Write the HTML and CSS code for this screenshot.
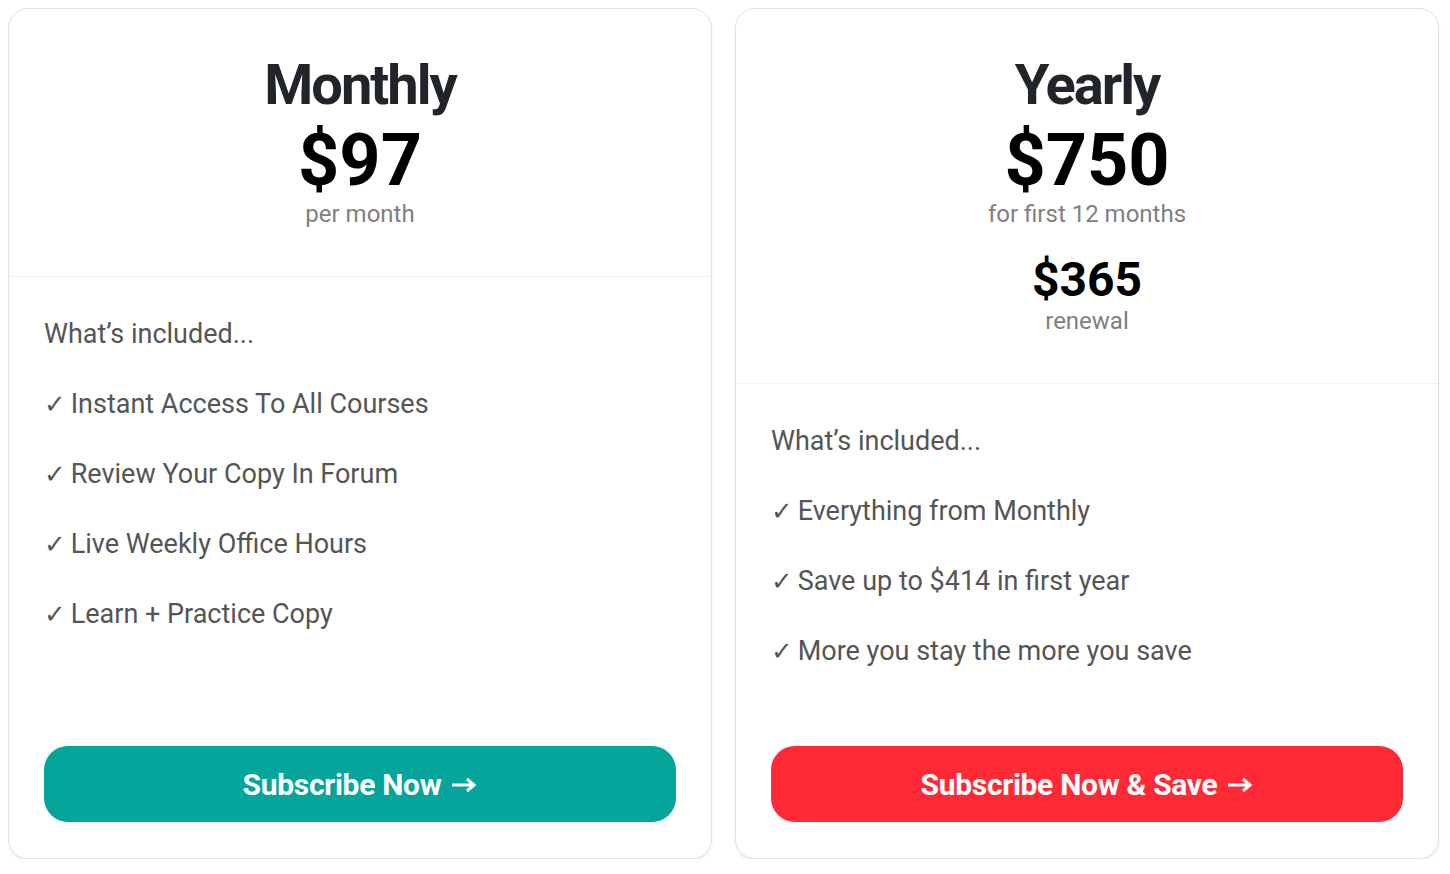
FILE: index.html
```html
<!DOCTYPE html>
<html lang="en">
<head>
<meta charset="utf-8">
<title>Pricing</title>
<link rel="stylesheet" href="styles.css">
</head>
<body>
<div class="plans">
  <div class="card">
    <div class="card-head">
      <div class="plan-name">Monthly</div>
      <div class="price">$97</div>
      <div class="price-note">per month</div>
    </div>
    <div class="card-body">
      <div class="included">What’s included...</div>
      <ul class="features">
        <li><span class="check">✓</span> Instant Access To All Courses</li>
        <li><span class="check">✓</span> Review Your Copy In Forum</li>
        <li><span class="check">✓</span> Live Weekly Office Hours</li>
        <li><span class="check">✓</span> Learn + Practice Copy</li>
      </ul>
      <a class="btn btn-teal" href="#">Subscribe Now <svg class="arrow" viewBox="0 0 26 16" width="26" height="16"><path d="M1 8 H23 M16 2 L23 8 L16 14" fill="none" stroke="#fff" stroke-width="3"/></svg></a>
    </div>
  </div>
  <div class="card">
    <div class="card-head">
      <div class="plan-name">Yearly</div>
      <div class="price">$750</div>
      <div class="price-note">for first 12 months</div>
      <div class="renew-price">$365</div>
      <div class="price-note">renewal</div>
    </div>
    <div class="card-body">
      <div class="included">What’s included...</div>
      <ul class="features">
        <li><span class="check">✓</span> Everything from Monthly</li>
        <li><span class="check">✓</span> Save up to $414 in first year</li>
        <li><span class="check">✓</span> More you stay the more you save</li>
      </ul>
      <a class="btn btn-red" href="#">Subscribe Now &amp; Save <svg class="arrow" viewBox="0 0 26 16" width="26" height="16"><path d="M1 8 H23 M16 2 L23 8 L16 14" fill="none" stroke="#fff" stroke-width="3"/></svg></a>
    </div>
  </div>
</div>
</body>
</html>
```

FILE: styles.css
```css
* { box-sizing: border-box; }
html, body { background: #ffffff; }
body {
  margin: 8px;
  font-family: Roboto, "Liberation Sans", Arial, sans-serif;
}
.plans {
  display: grid;
  grid-template-columns: 704px 704px;
  column-gap: 23px;
}
.card {
  height: 851px;
  border: 1px solid #e3e3e3;
  border-radius: 20px;
  box-shadow: 0 2px 3px rgba(0, 0, 0, 0.07);
  display: flex;
  flex-direction: column;
  background: #fff;
}
.card-head {
  padding: 40px 0 49px;
  text-align: center;
  border-bottom: 1px solid #f1f1f1;
}
.plan-name {
  font-size: 56px;
  line-height: 72px;
  font-weight: 700;
  color: #212529;
  letter-spacing: -2px;
}
.price {
  font-size: 72px;
  line-height: 80px;
  font-weight: 700;
  color: #000;
}
.renew-price {
  margin-top: 25px;
  font-size: 48px;
  line-height: 56px;
  font-weight: 700;
  color: #000;
}
.price-note {
  font-size: 24px;
  line-height: 26px;
  color: #808080;
}
.card-body {
  flex: 1;
  display: flex;
  flex-direction: column;
  padding: 42px 35px 36px;
}
.included {
  font-size: 27px;
  line-height: 30px;
  color: #555;
}
.features {
  list-style: none;
  margin: 40px 0 0;
  padding: 0;
  display: flex;
  flex-direction: column;
  gap: 40px;
}
.features li {
  font-size: 27px;
  line-height: 30px;
  height: 30px;
  color: #555;
}
.check {
  display: inline-block;
  width: 20px;
  overflow: visible;
  font-family: "DejaVu Sans", sans-serif;
  font-size: 26px;
  line-height: 0;
  color: #555;
}
.btn {
  margin-top: auto;
  display: flex;
  align-items: center;
  justify-content: center;
  gap: 10px;
  height: 76px;
  border-radius: 24px;
  color: #fff;
  font-size: 30px;
  font-weight: 700;
  letter-spacing: -0.3px;
  text-decoration: none;
}
.arrow { display: block; margin-top: 1px; }
.btn-teal { background: #06a59b; }
.btn-red { background: #ff2a35; }
```
